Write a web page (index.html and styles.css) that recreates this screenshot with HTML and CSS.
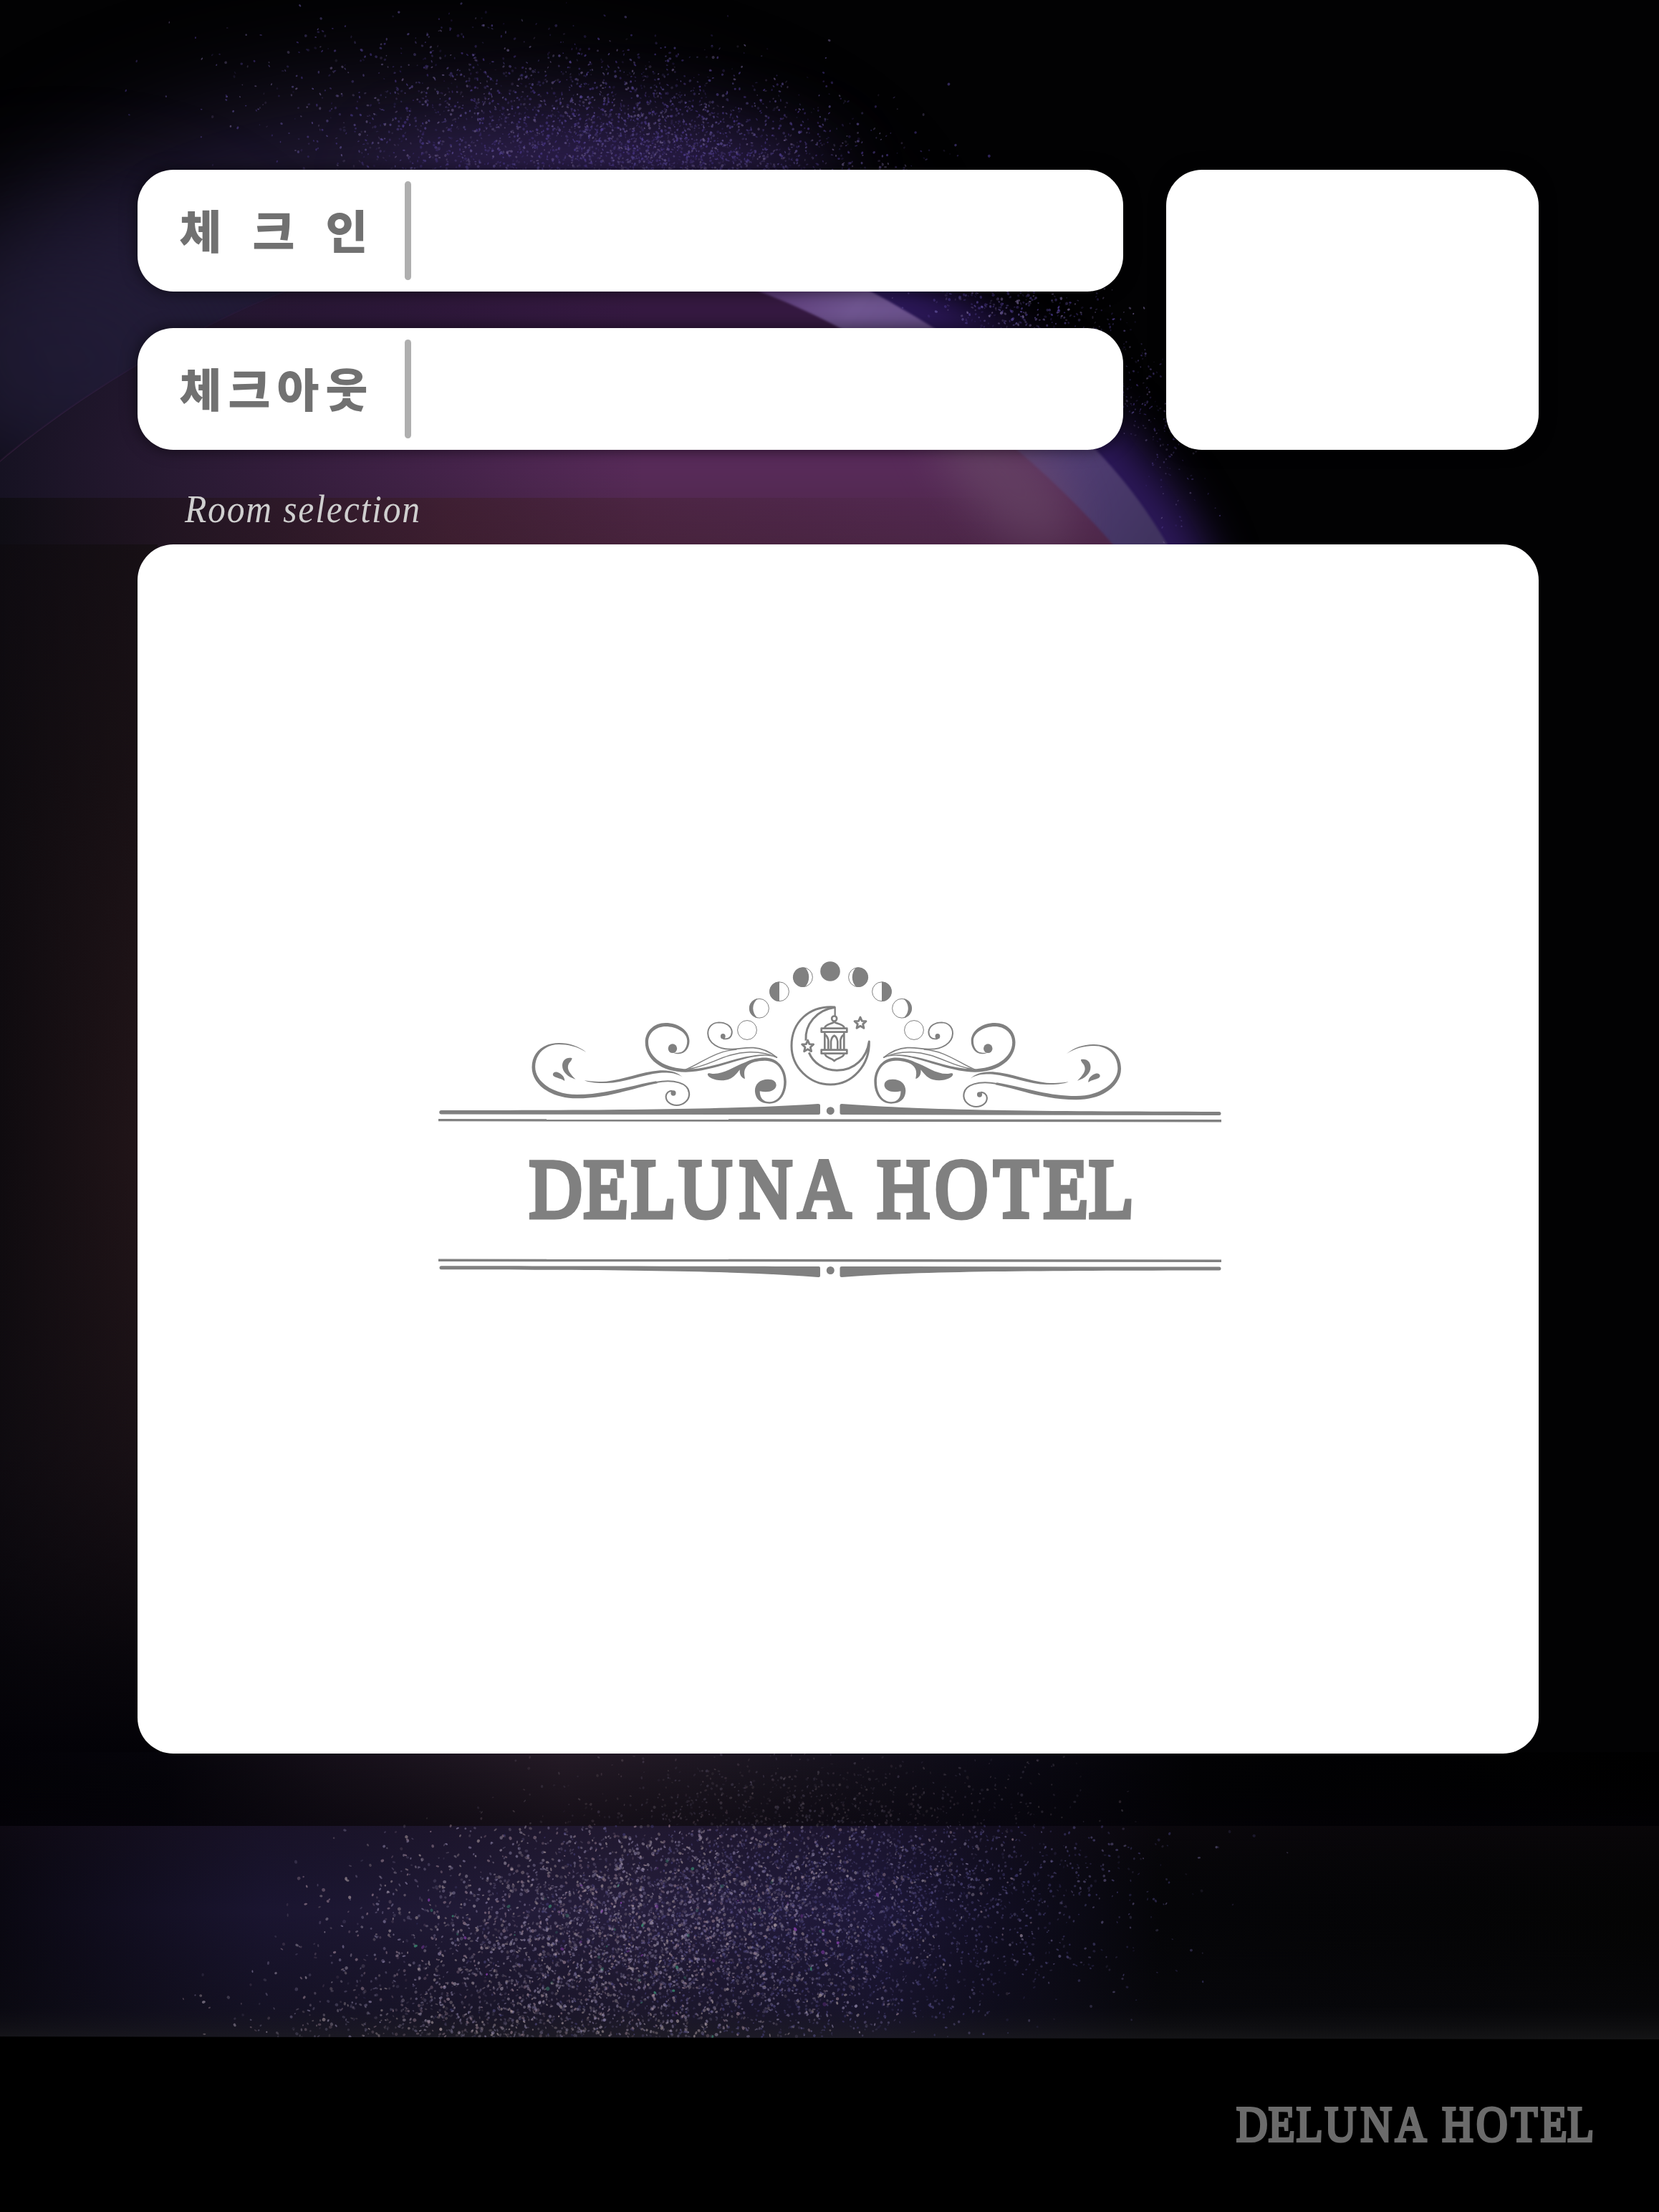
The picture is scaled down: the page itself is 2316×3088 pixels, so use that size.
FILE: index.html
```html
<!DOCTYPE html>
<html lang="ko">
<head>
<meta charset="utf-8">
<title>DELUNA HOTEL</title>
<link rel="stylesheet" href="styles.css">
</head>
<body>
<div class="page">
  <svg class="sky" viewBox="0 0 2316 3088" aria-hidden="true" color-interpolation-filters="sRGB">
    <defs>
      <filter id="b90" x="-60%" y="-80%" width="220%" height="260%"><feGaussianBlur stdDeviation="85"/></filter>
      <filter id="b60" x="-50%" y="-80%" width="200%" height="260%"><feGaussianBlur stdDeviation="55"/></filter>
      <filter id="b30" x="-50%" y="-50%" width="200%" height="200%"><feGaussianBlur stdDeviation="30"/></filter>
      <filter id="b2"><feGaussianBlur stdDeviation="1.5"/></filter>
      <linearGradient id="disk" x1="0" y1="400" x2="0" y2="760" gradientUnits="userSpaceOnUse">
        <stop offset="0" stop-color="#34183f"/><stop offset=".3" stop-color="#371b44"/><stop offset=".66" stop-color="#592b5b"/><stop offset="1" stop-color="#4c2648"/>
      </linearGradient>
      <linearGradient id="diskleft" x1="0" y1="0" x2="900" y2="0" gradientUnits="userSpaceOnUse">
        <stop offset="0" stop-color="#161222"/><stop offset=".25" stop-color="#1e162a" stop-opacity=".85"/><stop offset="1" stop-color="#221430" stop-opacity="0"/>
      </linearGradient>
      <linearGradient id="warm" x1="0" y1="0" x2="1400" y2="0" gradientUnits="userSpaceOnUse">
        <stop offset="0" stop-color="#0c0b0e" stop-opacity=".7"/><stop offset=".14" stop-color="#1a1016" stop-opacity=".6"/><stop offset=".45" stop-color="#3c1c20" stop-opacity=".5"/><stop offset="1" stop-color="#3c1c28" stop-opacity="0"/>
      </linearGradient>
      <linearGradient id="band" x1="1100" y1="400" x2="1600" y2="760" gradientUnits="userSpaceOnUse">
        <stop offset="0" stop-color="#5f3f7c"/><stop offset=".15" stop-color="#6f5590"/><stop offset=".7" stop-color="#543f78"/><stop offset="1" stop-color="#40335f"/>
      </linearGradient>
      <linearGradient id="side" x1="0" y1="0" x2="210" y2="0" gradientUnits="userSpaceOnUse">
        <stop offset="0" stop-color="#0f0b0f"/><stop offset="1" stop-color="#221519"/>
      </linearGradient>
      <linearGradient id="sidefade" x1="0" y1="760" x2="0" y2="2448" gradientUnits="userSpaceOnUse">
        <stop offset="0" stop-color="#0e0b12" stop-opacity=".55"/><stop offset=".2" stop-color="#0e0b0f" stop-opacity=".4"/><stop offset=".5" stop-color="#150f13" stop-opacity="0"/><stop offset=".75" stop-color="#0e0b11" stop-opacity=".45"/><stop offset=".92" stop-color="#050409" stop-opacity=".85"/><stop offset="1" stop-color="#030207" stop-opacity="1"/>
      </linearGradient>
      <linearGradient id="low" x1="0" y1="0" x2="2316" y2="0" gradientUnits="userSpaceOnUse">
        <stop offset="0" stop-color="#030207"/><stop offset=".1" stop-color="#05040a"/><stop offset=".2" stop-color="#150f19"/><stop offset=".34" stop-color="#241a26"/><stop offset=".45" stop-color="#1c1622"/><stop offset=".6" stop-color="#0c0a16"/><stop offset=".72" stop-color="#020204"/><stop offset="1" stop-color="#000"/>
      </linearGradient>
      <linearGradient id="floor" x1="0" y1="0" x2="2316" y2="0" gradientUnits="userSpaceOnUse">
        <stop offset="0" stop-color="#0a0812"/><stop offset=".16" stop-color="#1a1530"/><stop offset=".38" stop-color="#261e3c"/><stop offset=".53" stop-color="#1e183a"/><stop offset=".6" stop-color="#110e22"/><stop offset=".7" stop-color="#050508"/><stop offset="1" stop-color="#040404"/>
      </linearGradient>
      <linearGradient id="floorshade" x1="0" y1="2549" x2="0" y2="2846" gradientUnits="userSpaceOnUse">
        <stop offset="0" stop-color="#150c14" stop-opacity=".3"/><stop offset=".4" stop-color="#050508" stop-opacity="0"/><stop offset=".85" stop-color="#0b0b10" stop-opacity=".35"/><stop offset="1" stop-color="#1b1b1d" stop-opacity=".7"/>
      </linearGradient>
      <linearGradient id="lowshade" x1="0" y1="2448" x2="0" y2="2549" gradientUnits="userSpaceOnUse">
        <stop offset="0" stop-color="#000" stop-opacity="0"/><stop offset="1" stop-color="#040208" stop-opacity=".45"/>
      </linearGradient>
    </defs>
    <rect width="2316" height="3088" fill="#020203"/>
    <ellipse cx="600" cy="440" rx="600" ry="300" fill="#221a36" filter="url(#b90)"/>
    <ellipse cx="90" cy="500" rx="260" ry="200" fill="#211c36" opacity=".8" filter="url(#b90)"/>
    <ellipse cx="850" cy="260" rx="310" ry="80" fill="#33225a" opacity=".75" filter="url(#b60)"/>
    <path d="M1080 300C1300 370 1480 500 1570 600C1630 680 1690 730 1710 860L1400 860L1000 500Z" fill="#2c1859" filter="url(#b30)"/>
    <path d="M1100 350C1220 400 1420 520 1530 628C1570 670 1600 710 1632 764L1500 800L1000 500L900 350Z" fill="url(#band)" filter="url(#b2)"/>
    <path d="M0 645C100 560 260 460 400 407C600 330 850 330 1060 407C1250 478 1440 628 1557 764V900H0Z" fill="url(#disk)" filter="url(#b2)"/>
    <ellipse cx="1400" cy="660" rx="60" ry="130" transform="rotate(-42 1400 660)" fill="#6a4a68" opacity=".6" filter="url(#b30)"/>
    <path d="M0 645C100 560 260 460 400 407C600 330 850 330 1060 407L1300 700V900H0Z" fill="url(#diskleft)"/>
    <rect y="695" width="1400" height="80" fill="url(#warm)"/>
    <rect y="760" width="220" height="1700" fill="url(#side)"/>
    <rect y="760" width="220" height="1700" fill="url(#sidefade)"/>
    <rect y="2446" width="2316" height="104" fill="url(#low)"/>
    <rect y="2446" width="2316" height="104" fill="url(#lowshade)"/>
    <rect y="2549" width="2316" height="300" fill="url(#floor)"/>
    <rect y="2549" width="2316" height="300" fill="url(#floorshade)"/>
  </svg>
  <canvas class="sky" id="dust" width="2316" height="3088"></canvas>

  <main class="board">
    <div class="top">
      <div class="fields">
        <section class="field"><span class="label"><b>체</b><b>크</b><b>인</b></span><i class="rule"></i></section>
        <section class="field"><span class="label"><b>체</b><b>크</b><b>아</b><b>웃</b></span><i class="rule"></i></section>
      </div>
      <section class="stamp"></section>
    </div>
    <h2 class="caption"><span>Room selection</span></h2>
    <section class="panel">
      <svg class="emblem" viewBox="600 1320 1120 480" fill="#808080">
        <defs>
          <g id="scroll">
            <path d="M612 447C580 420 545 408 505 408C440 408 399 450 399 510C399 580 470 640 575 640C700 640 800 595 890 577L885 568C790 585 690 624 575 624C480 624 412 570 412 508C412 455 450 414 505 414C540 414 575 422 612 447Z"/>
            <path d="M883 573C950 560 1015 572 1014 625C1012 650 990 669 965 669C940 669 923 652 923 632C924 617 935 608 948 608" fill="none" stroke="#808080" stroke-width="6"/>
            <ellipse cx="952" cy="618" rx="10" ry="11"/>
            <path d="M604 565C640 571 660 570 690 569C760 562 820 530 900 523C940 520 970 532 988 551C960 532 930 532 900 533C830 540 760 575 690 576C650 577 625 574 604 565Z"/>
            <path d="M556 472C535 466 518 480 518 503C518 530 540 550 570 560C545 535 540 520 540 510C540 490 556 485 556 472Z"/>
            <path d="M481 540C482 528 495 526 508 535C522 545 527 555 527 567C510 553 482 555 481 540Z"/>
          </g>
          <g id="leaf">
            <ellipse cx="949" cy="431" rx="17.500" ry="19"/>
            <path d="M952 449C990 466 1015 435 1015 400C1015 355 970 324 922 324C875 324 842 360 842 405C842 475 905 530 1000 530C1080 530 1170 490 1240 472C1290 458 1325 458 1357 469C1320 450 1280 456 1235 466C1160 482 1090 517 1010 517C920 517 854 470 854 405C854 365 885 339 922 339C965 339 1007 365 1006 400C1006 430 990 452 965 449Z"/>
            <g fill="none" stroke="#808080">
              <path d="M1000 519C1060 495 1110 442 1200 435" stroke-width="4"/>
              <path d="M1012 517C1100 503 1150 450 1250 446C1300 445 1330 455 1357 469" stroke-width="4.500"/>
              <path d="M1146 390C1170 396 1182 380 1181 360C1178 335 1155 322 1130 322C1105 323 1087 340 1087 368C1088 410 1130 434 1175 434C1210 434 1230 426 1265 428C1305 430 1335 450 1358 470" stroke-width="5.500"/>
            </g>
            <ellipse cx="1146" cy="380" rx="9.500" ry="11"/>
            <path d="M1086 540C1086 533 1092 534 1105 537C1150 540 1190 505 1235 488C1260 475 1290 468 1320 470C1365 475 1394 520 1394 570C1394 620 1370 662 1328 662C1290 662 1271 640 1271 607C1271 580 1290 560 1322 560C1345 560 1356 572 1354 588C1350 608 1325 618 1290 610C1290 640 1305 655 1328 655C1360 655 1384 620 1384 570C1384 525 1360 482 1310 482C1280 482 1250 490 1238 508C1225 525 1230 545 1232 558C1215 553 1210 535 1212 520C1190 550 1175 565 1140 565C1110 564 1088 552 1086 540Z"/>
          </g>
          <path id="star" d="M0-24L7-8L24-7L11 5L15 22L0 13L-15 22L-11 5L-24-7L-7-8Z" fill="none" stroke="#808080" stroke-width="8.500"/>
        </defs>

        <g transform="translate(600 1320) scale(.35714 .33333)">
          <use href="#scroll"/><use href="#leaf"/>
          <use href="#leaf" transform="translate(3131 0) scale(-1 1)"/>
          <use href="#scroll" transform="translate(3101 6) scale(-1 1)"/>
        </g>

        <circle cx="1159" cy="1356" r="13.800"/>
        <g fill="none" stroke="#808080" stroke-width="1">
          <circle cx="1121" cy="1364.200" r="13.400"/><circle cx="1198" cy="1364.200" r="13.400"/>
          <circle cx="1088" cy="1384.300" r="13.400"/><circle cx="1231" cy="1384.300" r="13.400"/>
          <circle cx="1060" cy="1407.700" r="13.400"/><circle cx="1259" cy="1407.700" r="13.400"/>
          <circle cx="1043" cy="1438" r="13.400"/><circle cx="1276" cy="1438" r="13.400"/>
        </g>
        <path d="M1124 1350.800A13.800 13.800 0 1 0 1124 1377.600C1131 1370 1131 1358 1124 1350.800Z"/>
        <path d="M1195 1350.800A13.800 13.800 0 1 1 1195 1377.600C1188 1370 1188 1358 1195 1350.800Z"/>
        <path d="M1088 1370.500A13.800 13.800 0 0 0 1088 1398.100Z"/>
        <path d="M1231 1370.500A13.800 13.800 0 0 1 1231 1398.100Z"/>
        <path d="M1058 1394A13.800 13.800 0 0 0 1058 1421.400C1049 1414 1049 1401 1058 1394Z"/>
        <path d="M1261 1394A13.800 13.800 0 0 1 1261 1421.400C1270 1414 1270 1401 1261 1394Z"/>

        <g transform="translate(1080 1330) scale(.33333)" fill="none" stroke="#808080" stroke-width="9" stroke-linejoin="round">
          <path d="M257 228C150 220 75 290 75 390C75 480 150 552 238 552C330 552 403 470 400 372C390 440 340 493 265 493C210 493 165 460 148 418"/>
          <path d="M257 229C180 240 130 300 135 368"/>
          <path d="M257 226V266" stroke-width="7"/>
          <g stroke-width="8">
            <circle cx="254" cy="276" r="10.500"/>
            <path d="M214 314C220 298 240 300 254 290C268 300 290 298 296 314M200 317H307V332H200ZM200 407H307V422H200ZM215 425C220 442 240 438 254 453C268 438 290 442 295 425"/>
            <path d="M214 333V406M295 333V406M240 404V372Q243 352 254 347Q265 352 268 372V404M229 404V365Q226 350 215 343M280 404V365Q283 350 294 343"/>
          </g>
          <use href="#star" x="363" y="294"/>
          <use href="#star" x="143" y="391"/>
        </g>

        <path d="M616 1550C860 1550 1020 1549 1142 1541Q1145 1541 1145 1543V1554Q1145 1556 1143 1556L616 1555.500A2.700 2.700 0 0 1 616 1550Z"/>
        <path d="M1702 1552C1450 1551.500 1290 1550 1175 1541Q1172.500 1541 1172.500 1543V1554Q1172.500 1556 1175 1556L1702 1557A2.500 2.500 0 0 0 1702 1552Z"/>
        <circle cx="1159.300" cy="1550.700" r="5.500"/>
        <path d="M612 1562L1705 1563V1566.500L612 1565.200Z"/>
        <path d="M612 1757.500L1705 1758.500V1762L612 1761Z"/>
        <path d="M616 1767.300C760 1767.500 1000 1767.500 1143 1768Q1145 1768 1145 1770V1781Q1145 1783 1142 1783C1020 1773.500 860 1773 616 1772.300A2.500 2.500 0 0 1 616 1767.300Z"/>
        <path d="M1702 1768.600L1175 1768Q1172.500 1768 1172.500 1770V1781Q1172.500 1783 1175 1783C1290 1774 1450 1774 1702 1773.600A2.500 2.500 0 0 0 1702 1768.600Z"/>
        <circle cx="1159.300" cy="1773.500" r="5.500"/>
        <text class="name" transform="translate(736.500 1698.500) scale(.87 1)" x="3 90 166 243 340 434 561 654 748 828 901" y="0">DELUNAHOTEL</text>
      </svg>
    </section>
  </main>

  <footer class="footer">
    <svg class="mark" viewBox="735 1600 850 120" fill="#6b6b6b">
      <text class="name dim" transform="translate(736.500 1698.500) scale(.87 1)" x="3 90 166 243 340 434 561 654 748 828 901" y="0">DELUNAHOTEL</text>
    </svg>
  </footer>
</div>
<script src="dust.js"></script>
</body>
</html>
```
FILE: styles.css
```css
* { box-sizing: border-box; }
body { margin: 0; background: #000; }
.page {
  position: relative;
  width: 2316px;
  height: 3088px;
  overflow: hidden;
  display: flex;
  flex-direction: column;
}
.sky { position: absolute; left: 0; top: 0; width: 2316px; height: 3088px; }
.board {
  position: relative;
  height: 2843px;
  padding: 237px 168px 0 192px;
}
.top { display: flex; gap: 60px; height: 391px; }
.fields { display: flex; flex-direction: column; gap: 51px; width: 1376px; }
.field {
  display: flex;
  align-items: center;
  height: 170px;
  padding-left: 56px;
  border-radius: 50px;
  background: #fff;
  box-shadow: 0 0 22px rgba(0, 0, 0, .6);
}
.label {
  display: flex;
  justify-content: space-between;
  width: 268px;
  padding-bottom: 6px;
  font: 900 64px/84px "Noto Sans CJK KR", sans-serif;
  color: #717171;
}
.label b { font-weight: 900; width: 64px; text-align: center; }
.rule { width: 9px; height: 138px; margin-left: 49px; border-radius: 5px; background: #afafaf; }
.stamp { width: 520px; border-radius: 50px; background: #fff; box-shadow: 0 0 22px rgba(0, 0, 0, .6); }
.caption {
  height: 132px;
  margin: 0;
  padding: 52px 0 0 66px;
  font: italic 400 54px/62px "Liberation Serif", serif;
  letter-spacing: 2px;
  color: #cfcfcf;
}
.caption span { display: inline-block; transform: scaleX(.918); transform-origin: 0 50%; }
.panel { height: 1688px; padding: 560px 0 0 408px; border-radius: 50px; background: #fff; }
.emblem { display: block; width: 1120px; height: 480px; }
.name {
  font: 400 117px "Liberation Serif", serif;
  stroke: #808080;
  stroke-width: 7px;
}
.name.dim { stroke: #6b6b6b; }
.footer {
  position: relative;
  flex: 1;
  display: flex;
  justify-content: flex-end;
  padding: 88px 89px 0 0;
  background: #000;
  clip-path: polygon(0 0, 100% 4px, 100% 100%, 0 100%);
}
.mark { width: 504px; height: 71px; }
```
FILE: dust.js
```js
const ctx = document.getElementById('dust').getContext('2d');
let seed = 7;
function rnd() {
  seed = (seed * 1664525 + 1013904223) % 4294967296;
  return seed / 4294967296;
}
function gauss() {
  return (rnd() + rnd() + rnd() + rnd() - 2) * 0.9;
}
function cloud(n, cx, cy, sx, sy, tilt, colors, alpha, size, top, bottom) {
  for (let i = 0; i < n; i++) {
    const gx = gauss(), gy = gauss();
    const x = cx + gx * sx + gy * tilt;
    const y = cy + gy * sy;
    if (y < top || y > bottom) continue;
    ctx.globalAlpha = alpha * (0.25 + 0.75 * rnd());
    ctx.fillStyle = colors[Math.floor(rnd() * colors.length)];
    ctx.beginPath();
    ctx.ellipse(x, y, size * (0.4 + rnd() * 0.7), size * (0.4 + rnd() * 0.7), rnd() * 3, 0, 7);
    ctx.fill();
  }
}
const violet = ['#6a5aa8', '#5b49a0', '#7a6a9c', '#5540a0'];
const pale = ['#a79cae', '#b5a5a8', '#8f86a8', '#9a8fb5', '#aa8f9f'];
cloud(4200, 850, 225, 370, 160, 160, violet, 0.55, 1.9, 0, 240);
cloud(1500, 1000, 235, 220, 120, 150, violet, 0.6, 1.9, 0, 240);
cloud(420, 1420, 430, 110, 60, 60, violet, 0.7, 2, 400, 460);
cloud(260, 1600, 560, 50, 150, 60, violet, 0.5, 1.6, 400, 760);
cloud(1100, 1130, 2530, 340, 80, 0, pale, 0.22, 2, 2448, 2549);
cloud(5200, 880, 2700, 370, 210, -110, pale, 0.6, 2.3, 2549, 2844);
cloud(4200, 1150, 2680, 370, 190, -110, ['#5c5590', '#4e4888', '#6e6494'], 0.55, 2, 2549, 2844);
cloud(800, 650, 2850, 300, 80, 0, pale, 0.4, 2.2, 2549, 2844);
cloud(60, 880, 2700, 300, 100, 0, ['#8a3fb0', '#3f9a78'], 0.8, 2.6, 2549, 2844);
```
